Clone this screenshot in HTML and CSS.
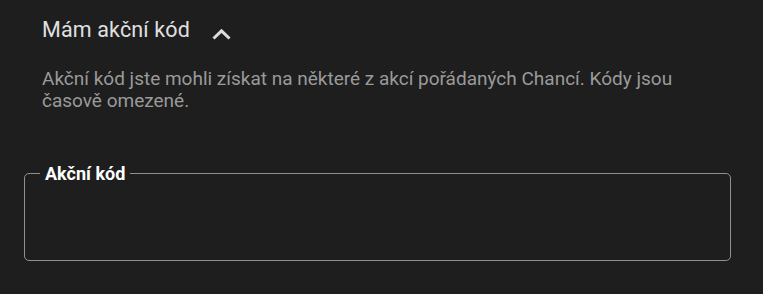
FILE: index.html
```html
<!DOCTYPE html>
<html lang="cs">
<head>
<meta charset="utf-8">
<title>Akční kód</title>
<link rel="stylesheet" href="styles.css">
</head>
<body>
<div class="panel">
  <div class="toggle">
    <span class="toggle-title">Mám akční kód</span>
    <svg class="chevron" width="19" height="11" viewBox="0 0 19 11">
      <polyline points="1.5,9.5 9.5,1.8 17.5,9.5" />
    </svg>
  </div>
  <p class="hint">Akční kód jste mohli získat na některé z akcí pořádaných Chancí. Kódy jsou časově omezené.</p>
  <fieldset class="field">
    <legend>Akční kód</legend>
    <input class="field-input" type="text">
  </fieldset>
</div>
</body>
</html>
```

FILE: styles.css
```css
body {
	margin: 0;
	background-color: #1e1e1e;
	font-family: Roboto, "Liberation Sans", sans-serif;
}
.panel {
	padding: 16px 32px 0 24px;
}
.toggle {
	display: flex;
	align-items: center;
	padding-left: 18px;
	height: 28px;
}
.toggle-title {
	font-size: 21.5px;
	letter-spacing: 0.15px;
	line-height: 28px;
	color: #e0e0e0;
}
.chevron {
	margin-left: 22px;
	margin-top: 8px;
}
.chevron polyline {
	fill: none;
	stroke: #dcdcdc;
	stroke-width: 3;
}
.hint {
	margin: 24px 0 0 0;
	padding-left: 18px;
	padding-right: 40px;
	font-size: 19px;
	line-height: 22px;
	color: #9a9a9a;
}
.field {
	margin: 51px 0 0 0;
	height: 98px;
	padding: 0;
	border: 1px solid #909090;
	border-radius: 5px;
	box-sizing: border-box;
}
.field legend {
	margin-left: 15px;
	padding: 0 5px;
	font-size: 18px;
	font-weight: bold;
	color: #ffffff;
}
.field-input {
	display: none;
}
```
